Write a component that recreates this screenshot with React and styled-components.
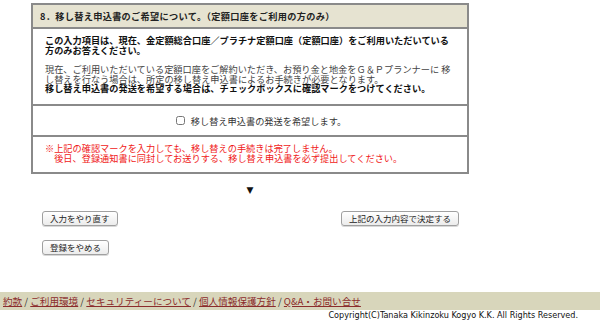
import styled, { createGlobalStyle } from "styled-components";

const GlobalStyle = createGlobalStyle`
  html, body {
    margin: 0;
    padding: 0;
    background: #ffffff;
  }
  body {
    font-family: "Noto Sans CJK JP", "Noto Sans", sans-serif;
    width: 600px;
    height: 321px;
    overflow: hidden;
  }
`;

function App() {
  return (
    <>
      <GlobalStyle />
      <Page>
        <Main>
          <Box>
            <Header>8．移し替え申込書のご希望について。（定額口座をご利用の方のみ）</Header>
            <Section $pad="6px 12px 10px">
              <Strong>
                この入力項目は、現在、金定額総合口座／プラチナ定額口座（定額口座）をご利用いただいている
                <br />
                方のみお答えください。
              </Strong>
              <Para>
                現在、ご利用いただいている定額口座をご解約いただき、お預り金と地金をＧ＆Ｐプランナーに 移
                <br />
                し替えを行なう場合は、所定の移し替え申込書によるお手続きが必要となります。
                <br />
                <b>移し替え申込書の発送を希望する場合は、チェックボックスに確認マークをつけてください。</b>
              </Para>
            </Section>
            <Section $pad="0" $center>
              <CheckLabel>
                <Check type="checkbox" />
                移し替え申込書の発送を希望します。
              </CheckLabel>
            </Section>
            <Section $pad="6px 12px 9px">
              <Notice>
                ※上記の確認マークを入力しても、移し替えの手続きは完了しません。
                <br />
                {"\u3000"}後日、登録通知書に同封してお送りする、移し替え申込書を必ず提出してください。
              </Notice>
            </Section>
          </Box>
          <Arrow>▼</Arrow>
          <ButtonRow>
            <Button>入力をやり直す</Button>
            <Button>上記の入力内容で決定する</Button>
          </ButtonRow>
          <ButtonRow>
            <Button>登録をやめる</Button>
          </ButtonRow>
        </Main>
        <Footer>
          <Links>
            <a href="#">約款</a> / <a href="#">ご利用環境</a> /{" "}
            <a href="#">セキュリティーについて</a> / <a href="#">個人情報保護方針</a> /{" "}
            <a href="#">Q&amp;A・お問い合せ</a>
          </Links>
        </Footer>
        <Copyright>Copyright(C)Tanaka Kikinzoku Kogyo K.K. All Rights Reserved.</Copyright>
      </Page>
    </>
  );
}

const Page = styled.div`
  display: flex;
  flex-direction: column;
  width: 600px;
`;

const Main = styled.div`
  width: 438px;
  margin-left: 31px;
  padding-top: 3px;
  height: 289px;
  box-sizing: border-box;
`;

const Box = styled.div`
  border: 2px solid #8a8a8a;
  display: flex;
  flex-direction: column;
`;

const Header = styled.div`
  background: #e6e3d1;
  height: 22px;
  line-height: 22px;
  padding-left: 7px;
  font-size: 9.2px;
  font-weight: bold;
  letter-spacing: 0.3px;
  color: #222;
  border-bottom: 2px solid #8a8a8a;
`;

const Section = styled.div`
  padding: ${(p) => p.$pad};
  border-top: 2px solid #8a8a8a;
  display: flex;
  flex-direction: column;
  justify-content: center;
  align-items: ${(p) => (p.$center ? "center" : "stretch")};
  min-height: ${(p) => (p.$center ? "29px" : "0")};
  &:nth-child(2) {
    border-top: none;
  }
`;

const Strong = styled.div`
  font-size: 9.2px;
  font-weight: bold;
  line-height: 10px;
  color: #111;
  white-space: nowrap;
`;

const Para = styled.div`
  margin-top: 10px;
  font-size: 9.2px;
  line-height: 9.7px;
  color: #444;
  white-space: nowrap;
  b {
    color: #111;
  }
`;

const CheckLabel = styled.label`
  display: flex;
  align-items: center;
  gap: 6px;
  font-size: 9.2px;
  color: #333;
  margin-left: 22px;
`;

const Check = styled.input`
  margin: 0;
  width: 9px;
  height: 9px;
`;

const Notice = styled.div`
  font-size: 9.2px;
  line-height: 10px;
  color: #f01818;
  white-space: nowrap;
`;

const Arrow = styled.div`
  text-align: center;
  font-size: 9px;
  line-height: 10px;
  margin-top: 11px;
  color: #111;
  font-family: "DejaVu Sans", sans-serif;
`;

const ButtonRow = styled.div`
  display: flex;
  justify-content: space-between;
  padding: 0 10px 0 11px;
  margin-top: 16px;
  & + & {
    margin-top: 14px;
  }
`;

const Button = styled.button`
  font-family: "Noto Sans CJK JP", sans-serif;
  font-size: 8.5px;
  height: 15px;
  line-height: 13px;
  padding: 0 7px;
  color: #222;
  border: 1px solid #a0a0a0;
  border-radius: 3px;
  background: linear-gradient(#ffffff, #ececec);
  box-shadow: 0 1px 0 #d8d8d8;
`;

const Footer = styled.div`
  background: #d8d6bb;
  height: 18px;
  display: flex;
  align-items: center;
  padding-left: 3px;
  margin-top: 3px;
`;

const Links = styled.div`
  font-size: 9.6px;
  color: #333;
  a {
    color: #8b2c2c;
    text-decoration: underline;
  }
`;

const Copyright = styled.div`
  text-align: right;
  padding-right: 22px;
  font-family: "DejaVu Sans Condensed", "DejaVu Sans", sans-serif;
  font-size: 9px;
  line-height: 11px;
  color: #111;
`;

export default App;
